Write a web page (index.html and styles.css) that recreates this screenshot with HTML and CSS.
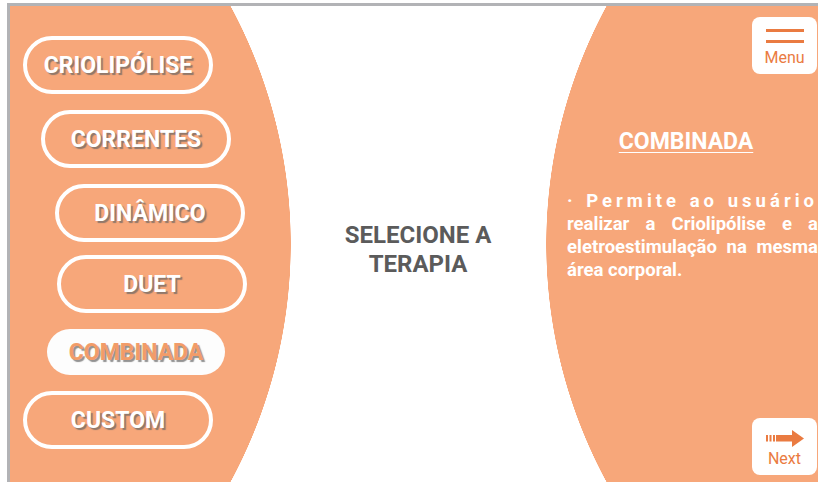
FILE: index.html
```html
<!DOCTYPE html>
<html lang="pt-BR">
<head>
    <meta charset="UTF-8">
    <meta name="viewport" content="width=device-width, initial-scale=1.0">
    <title>Selecione a Terapia</title>
    <link rel="stylesheet" href="styles.css">
</head>
<body>

<div class="screen">

    <!-- Therapy list -->
    <div class="therapies">
        <button class="pill pill-1">CRIOLIPÓLISE</button>
        <button class="pill pill-2">CORRENTES</button>
        <button class="pill pill-3">DINÂMICO</button>
        <button class="pill pill-4">DUET</button>
        <button class="pill pill-5 active">COMBINADA</button>
        <button class="pill pill-6">CUSTOM</button>
    </div>

    <div class="prompt">
        <p>SELECIONE A<br>TERAPIA</p>
    </div>

    <!-- Description of the selected therapy -->
    <div class="details">
        <button class="nav-btn menu-btn">
            <span class="bars"><span></span><span></span></span>
            <span class="nav-label">Menu</span>
        </button>

        <h3 class="details-title">COMBINADA</h3>
        <p class="details-text"><span class="spread">· Permite ao usuário</span> realizar a Criolipólise e a eletroestimulação na mesma área corporal.</p>

        <button class="nav-btn next-btn">
            <svg class="arrow" width="38" height="17" viewBox="0 0 38 17">
                <rect x="0" y="5" width="2" height="6.5" fill="#ea7b41"/>
                <rect x="3.5" y="5" width="2" height="6.5" fill="#ea7b41"/>
                <rect x="7" y="5" width="2" height="6.5" fill="#ea7b41"/>
                <rect x="10" y="5" width="17" height="6.5" fill="#ea7b41"/>
                <polygon points="26,0 38,8.5 26,17" fill="#ea7b41"/>
            </svg>
            <span class="nav-label">Next</span>
        </button>
    </div>

</div>

</body>
</html>
```

FILE: styles.css
```css
body {
    margin: 0;
    background: #fff;
    font-family: Roboto, "Liberation Sans", sans-serif;
}
.screen {
    box-sizing: border-box;
    margin: 3px 0 0 7px;
    height: 479px;
    border-top: 3px solid #b2b3b6;
    border-left: 3px solid #b2b3b6;
    overflow: hidden;
    display: grid;
    grid-template-columns: 259px 1fr 251px;
    background:
        radial-gradient(circle 500px at -219px 238px, #f7a77a 499.5px, transparent 500px),
        radial-gradient(circle 500px at 1036px 238px, #f7a77a 499.5px, transparent 500px),
        #fff;
}

/* left column */
.therapies {
    display: flex;
    flex-direction: column;
    align-items: flex-start;
    gap: 16px;
    padding-top: 30px;
}
.pill {
    box-sizing: border-box;
    width: 190px;
    height: 58px;
    border: 4px solid #fff;
    border-radius: 29px;
    background: transparent;
    color: #fff;
    font-family: Roboto, "Liberation Sans", sans-serif;
    font-weight: 700;
    font-size: 23px;
    text-shadow: 2px 2px 1px rgba(100, 100, 100, 0.7);
    padding: 0;
    cursor: pointer;
}
.pill-1 { margin-left: 13px; }
.pill-2 { margin-left: 31px; }
.pill-3 { margin-left: 45px; }
.pill-4 { margin-left: 47px; margin-top: -3px; }
.pill-5 { margin-left: 37px; }
.pill-6 { margin-left: 13px; }
.pill.active {
    width: 178px;
    height: 46px;
    border: none;
    background: #fdfdfd;
    color: #f29c69;
}

/* center */
.prompt {
    display: flex;
    align-items: center;
    justify-content: center;
    padding-top: 11px;
}
.prompt p {
    margin: 0;
    text-align: center;
    color: #5b5b5b;
    font-weight: 700;
    font-size: 24px;
    line-height: 29px;
}

/* right column */
.details {
    display: flex;
    flex-direction: column;
    padding: 11px 0 7px 0;
    color: #fff;
}
.nav-btn {
    box-sizing: border-box;
    align-self: flex-end;
    margin-right: 1px;
    width: 65px;
    height: 57px;
    border: none;
    border-radius: 8px;
    background: #fff;
    display: flex;
    flex-direction: column;
    align-items: center;
    padding: 12px 0 0 0;
    cursor: pointer;
}
.bars {
    display: flex;
    flex-direction: column;
    gap: 8px;
    width: 38px;
}
.bars span {
    height: 3px;
    background: #ea7b41;
}
.nav-label {
    color: #ea7b41;
    font-family: Roboto, "Liberation Sans", sans-serif;
    font-size: 16px;
    line-height: 18px;
}
.menu-btn .nav-label {
    margin-top: 6px;
}
.next-btn {
    margin-top: auto;
}
.next-btn .nav-label {
    margin-top: 3px;
}
.details-title {
    margin: 54px 13px 0 0;
    text-align: center;
    font-size: 23px;
    line-height: 28px;
    font-weight: 700;
    text-decoration: underline;
    text-underline-offset: 3px;
    text-decoration-thickness: 1px;
}
.details-text {
    margin: 34px 0 0 0;
    width: 251px;
    text-align: justify;
    font-size: 18.5px;
    line-height: 23px;
    font-weight: 700;
}
.spread {
    letter-spacing: 4px;
}
```
